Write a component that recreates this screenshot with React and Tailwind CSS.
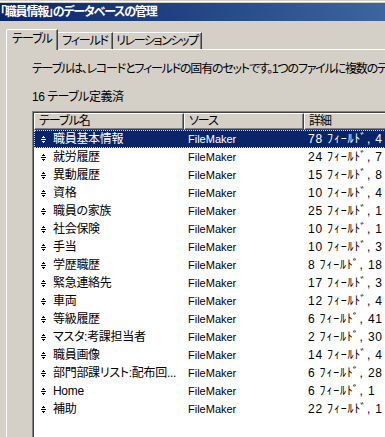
import React from "react";

const rows = [
  ["職員基本情報", "78 ﾌｨｰﾙﾄﾞ, 4"],
  ["就労履歴", "24 ﾌｨｰﾙﾄﾞ, 7"],
  ["異動履歴", "15 ﾌｨｰﾙﾄﾞ, 8"],
  ["資格", "10 ﾌｨｰﾙﾄﾞ, 4"],
  ["職員の家族", "25 ﾌｨｰﾙﾄﾞ, 1"],
  ["社会保険", "10 ﾌｨｰﾙﾄﾞ, 1"],
  ["手当", "10 ﾌｨｰﾙﾄﾞ, 3"],
  ["学歴職歴", "8 ﾌｨｰﾙﾄﾞ, 18"],
  ["緊急連絡先", "17 ﾌｨｰﾙﾄﾞ, 3"],
  ["車両", "12 ﾌｨｰﾙﾄﾞ, 4"],
  ["等級履歴", "6 ﾌｨｰﾙﾄﾞ, 41"],
  ["マスタ:考課担当者", "2 ﾌｨｰﾙﾄﾞ, 30"],
  ["職員画像", "14 ﾌｨｰﾙﾄﾞ, 4"],
  ["部門部課リスト:配布回...", "6 ﾌｨｰﾙﾄﾞ, 28"],
  ["Home", "6 ﾌｨｰﾙﾄﾞ, 1"],
  ["補助", "22 ﾌｨｰﾙﾄﾞ, 1"],
];

function Icon() {
  return (
    <svg width="5" height="7" viewBox="0 0 5 7" shapeRendering="crispEdges" fill="currentColor" className="shrink-0">
      <rect x="2" y="0" width="1" height="1" />
      <rect x="1" y="1" width="3" height="1" />
      <rect x="0" y="3" width="5" height="1" />
      <rect x="1" y="5" width="3" height="1" />
      <rect x="2" y="6" width="1" height="1" />
    </svg>
  );
}

function HeaderCell({ w, children }) {
  return (
    <div
      className={`${w} h-[17px] shrink-0 bg-[#d4d0c8] border-t border-l border-white border-r border-b border-r-[#404040] border-b-[#404040] shadow-[inset_-1px_-1px_0_#808080] pl-[4px] text-[12px] leading-[14px] tracking-[-1px] text-black whitespace-nowrap overflow-hidden`}
    >
      {children}
    </div>
  );
}

export default function App() {
  const font = "font-['Liberation_Sans','Noto_Sans_CJK_JP',sans-serif] [font-feature-settings:'palt']";
  return (
    <div className={`w-[385px] h-[437px] bg-[#d4d0c8] overflow-hidden flex flex-col ${font}`}>
      <div className="h-[1px] bg-[#d4d0c8]" />
      <div className="h-[1px] bg-white" />
      <div className="h-[1px] bg-[#d4d0c8]" />
      <div className="h-[18px] bg-gradient-to-r from-[#0a246a] to-[#3e659e] text-white font-bold text-[12px] leading-[18px] tracking-[-1.2px] whitespace-nowrap">
        「職員情報」のデータベースの管理
      </div>
      <div className="h-[8px]" />
      {/* Tabs */}
      <div className="flex items-end h-[20px] pl-[6px] relative z-10">
        <div className="w-[52px] h-[21px] mb-[-1px] bg-[#d4d0c8] border-t border-l border-white rounded-tl-[2px] border-r border-r-[#404040] shadow-[inset_-1px_0_0_#808080] text-[12px] leading-[18px] tracking-[-1px] text-black text-center whitespace-nowrap">
          テーブル
        </div>
        <div className="w-[55px] h-[17px] bg-[#d4d0c8] border-t border-white border-r border-r-[#404040] shadow-[inset_-1px_0_0_#808080] text-[12px] leading-[16px] tracking-[-1.2px] text-black text-center whitespace-nowrap">
          フィールド
        </div>
        <div className="w-[89px] h-[17px] bg-[#d4d0c8] border-t border-white border-r border-r-[#404040] shadow-[inset_-1px_0_0_#808080] text-[12px] leading-[16px] tracking-[-1.4px] text-black text-center whitespace-nowrap">
          リレーションシップ
        </div>
      </div>
      {/* Panel */}
      <div className="flex-1 ml-[6px] border-t border-l border-white flex flex-col pl-[25px] pt-[12px] min-h-0">
        <div className="text-[12px] leading-[14px] tracking-[-1.2px] text-black whitespace-nowrap">
          テーブルは、レコードとフィールドの固有のセットです。1つのファイルに複数のテ
        </div>
        <div className="mt-[14px] text-[12px] leading-[14px] tracking-[-0.5px] text-black whitespace-nowrap">16 テーブル定義済</div>
        <div className="mt-[7px] flex-1 w-[420px] border-t border-l border-[#808080] min-h-0">
          <div className="h-full border-t border-l border-[#404040] bg-white flex flex-col">
            <div className="flex">
              <HeaderCell w="w-[150px]">テーブル名</HeaderCell>
              <HeaderCell w="w-[120px]">ソース</HeaderCell>
              <HeaderCell w="w-[150px]">詳細</HeaderCell>
            </div>
            {rows.map(([name, detail], i) => {
              const sel = i === 0;
              return (
                <div
                  key={i}
                  className={`flex h-[18px] items-center whitespace-nowrap text-[12px] ${
                    sel ? "bg-[#0a246a] text-white border border-dotted border-[#e8dc9c]" : "text-black border border-transparent"
                  }`}
                >
                  <div className="w-[149px] shrink-0 flex items-center pl-[6px] overflow-hidden">
                    <Icon />
                    <span className="ml-[7px] leading-[16px] tracking-[-0.3px]">{name}</span>
                  </div>
                  <div className="w-[120px] shrink-0 pl-[4px] text-[11px] leading-[16px]">FileMaker</div>
                  <div className="shrink-0 pl-[4px] leading-[16px] tracking-[0.8px] [font-feature-settings:normal]">{detail}</div>
                </div>
              );
            })}
          </div>
        </div>
      </div>
    </div>
  );
}
